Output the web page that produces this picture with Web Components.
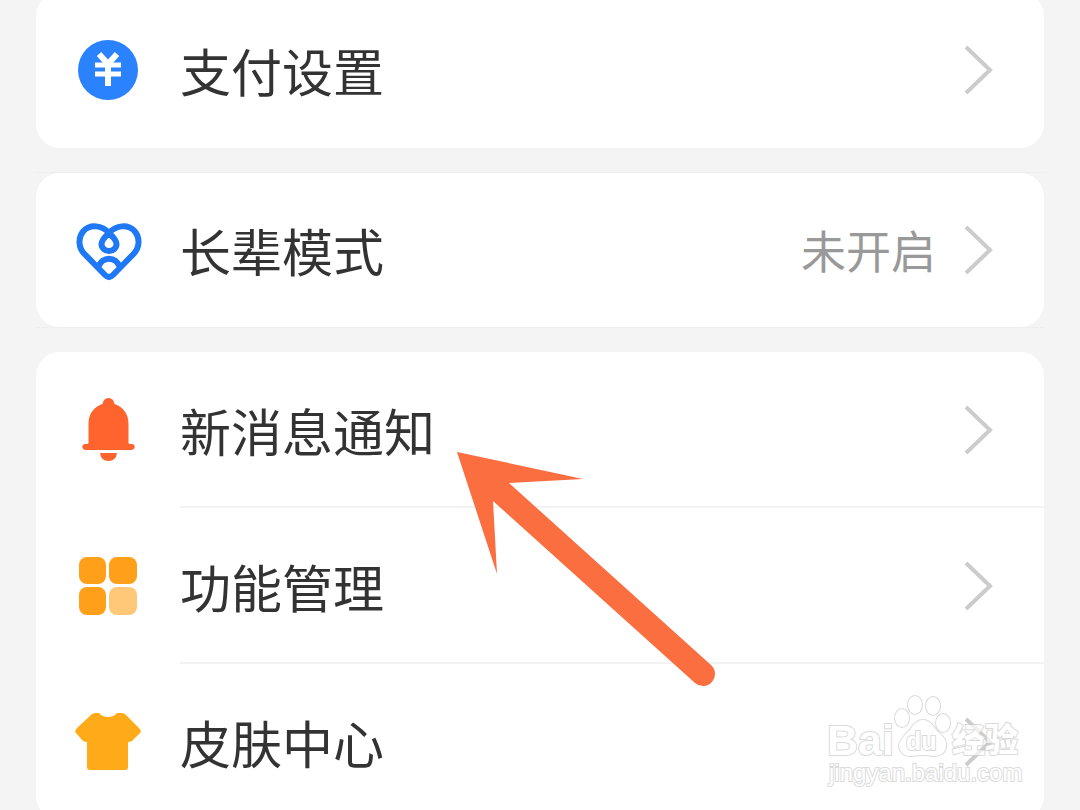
<!DOCTYPE html>
<html lang="zh-CN">
<head>
<meta charset="utf-8">
<meta name="viewport" content="width=device-width, initial-scale=1">
<title>设置</title>
<style>
body { margin: 0; height: 100vh; overflow: hidden; background: #f4f4f4; color: #333; font-family: "Noto Sans CJK SC", sans-serif; }
</style>
</head>
<body>
<settings-page>
  <settings-card>
    <settings-row icon="pay">支付设置</settings-row>
  </settings-card>
  <settings-card ruled>
    <settings-row icon="heart">长辈模式<span slot="value">未开启</span></settings-row>
  </settings-card>
  <settings-card>
    <settings-row icon="bell" divided>新消息通知</settings-row>
    <settings-row icon="grid" divided>功能管理</settings-row>
    <settings-row icon="shirt">皮肤中心</settings-row>
  </settings-card>
  <pointer-arrow slot="overlay"></pointer-arrow>
  <site-watermark slot="overlay"></site-watermark>
</settings-page>
<script>
const define = (name, html, setup) => {
  const template = document.createElement('template');
  template.innerHTML = html;
  customElements.define(name, class extends HTMLElement {
    constructor() {
      super();
      this.attachShadow({ mode: 'open' }).append(template.content.cloneNode(true));
    }
    connectedCallback() { if (setup) setup(this); }
  });
};

const icons = {
  pay: '<circle cx="36" cy="36" r="30" fill="#2a82ff"/><g fill="none" stroke="#fff" stroke-width="6"><path d="M27 20l9 10 9-10M36 28v24"/><path d="M23 31h26M23 40h26" stroke-width="5"/></g>',
  heart: '<g fill="none" stroke="#1f78f5" stroke-width="6" stroke-linejoin="round" stroke-linecap="round"><path d="M37 19C30 11 18 10 11.500 17c-6 7-5 17 1 23L33 61q4 4 8 0L61.500 40c6-6 7-16 1-23C56 10 44 11 37 19q-7.500 7-7.500 11a7.500 7 0 0 0 15 0q0-4-7.500-11M26 53c5-11 17-11 22 0"/></g>',
  bell: '<path d="M36.500 4q5 0 6 6c9 3 14 10 14 20v19q0 1 2 1h2q3 1 2 4-1 2-3 2h-46q-2 0-3-2-1-3 2-4h2q2 0 2-1V30c0-10 5-17 14-20q1-6 6-6zM28 59h17q-1 8-8.500 8T28 59z" fill="#ff642f"/>',
  grid: '<g fill="#ff9f1a"><rect x="7" y="7" width="27" height="27" rx="8"/><rect x="37" y="7" width="28" height="27" rx="8"/><rect x="7" y="37" width="27" height="28" rx="8"/><rect x="37" y="37" width="28" height="28" rx="8" fill="#ffc878"/></g>',
  shirt: '<path d="M20 8q2-1 4-1h3q3 4 9 4t9-4h4q2 0 4 1l14 14q3 3 1 5L60 35q-2 1-4 1v25q0 3-3 3H18q-3 0-3-3V36q-2 0-4-1L4 27q-2-2 1-5z" fill="#ffaa18"/>'
};

define('settings-page', `
  <style>
    :host { display: flow-root; position: relative; }
    main { display: flex; flex-direction: column; gap: 24px; margin: -8px 36px 0; }
  </style>
  <main><slot></slot></main>
  <slot name="overlay"></slot>`);

define('settings-card', `
  <style>
    :host { display: block; --row-height: 156px; }
    :host([ruled]) { --row-height: 154px; border-block: 1px solid #efefef; }
    section { background: #fff; border-radius: 24px; overflow: hidden; }
  </style>
  <section><slot></slot></section>`);

define('settings-row', `
  <style>
    :host { display: block; }
    a { display: flex; align-items: center; height: var(--row-height); padding-left: 36px; color: #333; text-decoration: none; }
    .icon { flex: none; width: 72px; height: 72px; margin-right: 36px; }
    .body { flex: 1; display: flex; align-items: center; align-self: stretch; padding-right: 50px; }
    :host([divided]) .body { box-shadow: inset 0 -2px #f3f3f3; }
    .label { flex: 1; font-size: 51px; line-height: 74px; }
    .value { font-size: 45px; line-height: 66px; color: #999; margin-right: 28px; }
    .chevron { flex: none; width: 30px; height: 50px; }
  </style>
  <a href="#">
    <svg class="icon" viewBox="0 0 72 72" aria-hidden="true"></svg>
    <span class="body">
      <span class="label"><slot></slot></span>
      <span class="value"><slot name="value"></slot></span>
      <svg class="chevron" viewBox="0 0 30 50" aria-hidden="true"><path d="M2 2L26 25 2 48" fill="none" stroke="#ccc" stroke-width="4"/></svg>
    </span>
  </a>`, el => {
  el.shadowRoot.querySelector('.icon').innerHTML = icons[el.getAttribute('icon')] || '';
});

define('pointer-arrow', `
  <style>
    :host { display: block; position: absolute; left: 457px; top: 452px; pointer-events: none; }
    svg { display: block; width: 260px; height: 236px; }
  </style>
  <svg viewBox="0 0 260 236" aria-hidden="true"><path d="M0 0L126 27 52 31 254 213A12 12 0 0 1 238 231L36 49 40 122z" fill="#fa6e40"/></svg>`);

define('site-watermark', `
  <style>
    :host { display: block; position: absolute; right: 50px; top: 690px; pointer-events: none; }
    svg { display: block; width: 204px; height: 100px; }
    g { opacity: .7; fill: #fff; stroke: #ccc; stroke-width: 2; paint-order: stroke; }
    text { font-family: "Liberation Sans", sans-serif; }
    .bold { font-weight: 700; }
    .cjk { font-family: "Noto Sans CJK SC", sans-serif; font-weight: 900; }
  </style>
  <svg viewBox="0 0 204 100">
    <g>
      <text class="bold" x="1" y="65" font-size="43">Bai</text>
      <ellipse cx="76" cy="28" rx="7" ry="9"/>
      <ellipse cx="89" cy="15" rx="7" ry="9"/>
      <ellipse cx="107" cy="16" rx="7" ry="9"/>
      <ellipse cx="117" cy="33" rx="7" ry="9"/>
      <path d="M97 30c8 0 10 7 16 13 6 5 8 9 7 14-1 6-6 9-11 9s-7-1-12-1-8 1-13 1c-6 0-10-4-11-9 0-5 3-9 8-14 6-6 8-13 16-13z"/>
      <text class="bold" x="80" y="60" font-size="25">du</text>
      <text class="cjk" x="126" y="62" font-size="33">经验</text>
      <text x="3" y="91" font-size="24">jingyan.baidu.com</text>
    </g>
  </svg>`);
</script>
</body>
</html>
